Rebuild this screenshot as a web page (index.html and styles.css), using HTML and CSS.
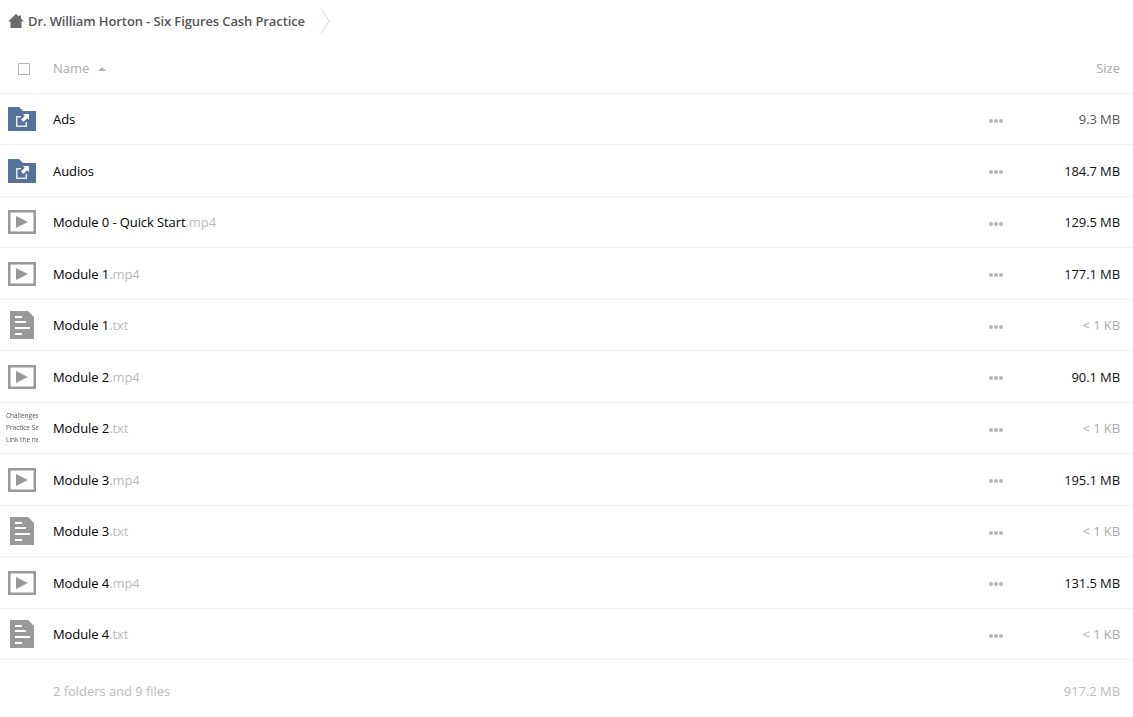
FILE: index.html
```html
<!DOCTYPE html>
<html lang="en">
<head>
<meta charset="utf-8">
<title>Dr. William Horton - Six Figures Cash Practice</title>
<link rel="stylesheet" href="styles.css">
</head>
<body>
<svg class="defs" width="0" height="0" aria-hidden="true">
  <symbol id="i-folder" viewBox="0 0 28 24">
    <path fill="#55729b" d="M0 0H11L15 4H28V24H0Z"/>
    <path fill="none" stroke="#e4e9f0" stroke-width="1.5" d="M13 9.75H8.75V19.25H18.25V15"/>
    <path fill="#fff" d="M15 7H21V13L19.2 11.2L15.4 15L13 12.6L16.8 8.8Z"/>
  </symbol>
  <symbol id="i-video" viewBox="0 0 28 24">
    <rect x="1.25" y="1.25" width="25.5" height="21.5" fill="#fff" stroke="#999" stroke-width="2.5"/>
    <path fill="#999" d="M8 6L20 12L8 18Z"/>
  </symbol>
  <symbol id="i-doc" viewBox="0 0 24 28">
    <path fill="#999" d="M0 0H18L24 6V28H0Z"/>
    <path fill="#fff" d="M5 5H12V7H5ZM5 10H16V12H5ZM5 16H20V18H5ZM5 22H12V24H5Z"/>
  </symbol>
</svg>

<nav class="crumbs">
  <svg class="home" viewBox="0 0 16 14" aria-hidden="true"><path fill="#6a6a6a" d="M8 0L11 2.6V1.5H13V4.4L16 7.5H13.5V14H2.5V7.5H0Z"/></svg>
  <span class="crumb-title">Dr. William Horton - Six Figures Cash Practice</span>
  <svg class="chev" viewBox="0 0 10 26" aria-hidden="true"><path fill="none" stroke="#ddd" d="M1 .5L9 13L1 25.5"/></svg>
</nav>

<div class="head row-grid">
  <span class="check"></span>
  <span class="head-name">Name <i class="sort"></i></span>
  <span></span>
  <span class="head-size">Size</span>
</div>

<ul class="list">
  <li class="row row-grid"><svg class="ic"><use href="#i-folder"/></svg><span class="name">Ads</span><span class="dots"><i></i><i></i><i></i></span><span class="size s-grey">9.3 MB</span></li>
  <li class="row row-grid"><svg class="ic"><use href="#i-folder"/></svg><span class="name">Audios</span><span class="dots"><i></i><i></i><i></i></span><span class="size">184.7 MB</span></li>
  <li class="row row-grid"><svg class="ic"><use href="#i-video"/></svg><span class="name">Module 0 - Quick Start<em>.mp4</em></span><span class="dots"><i></i><i></i><i></i></span><span class="size">129.5 MB</span></li>
  <li class="row row-grid"><svg class="ic"><use href="#i-video"/></svg><span class="name">Module 1<em>.mp4</em></span><span class="dots"><i></i><i></i><i></i></span><span class="size">177.1 MB</span></li>
  <li class="row row-grid"><svg class="ic ic-doc"><use href="#i-doc"/></svg><span class="name">Module 1<em>.txt</em></span><span class="dots"><i></i><i></i><i></i></span><span class="size s-light">&lt; 1 KB</span></li>
  <li class="row row-grid"><svg class="ic"><use href="#i-video"/></svg><span class="name">Module 2<em>.mp4</em></span><span class="dots"><i></i><i></i><i></i></span><span class="size">90.1 MB</span></li>
  <li class="row row-grid"><div class="thumb"><p>Challenges</p><p>Practice Se</p><p>Link the ne</p></div><span class="name">Module 2<em>.txt</em></span><span class="dots"><i></i><i></i><i></i></span><span class="size s-light">&lt; 1 KB</span></li>
  <li class="row row-grid"><svg class="ic"><use href="#i-video"/></svg><span class="name">Module 3<em>.mp4</em></span><span class="dots"><i></i><i></i><i></i></span><span class="size">195.1 MB</span></li>
  <li class="row row-grid"><svg class="ic ic-doc"><use href="#i-doc"/></svg><span class="name">Module 3<em>.txt</em></span><span class="dots"><i></i><i></i><i></i></span><span class="size s-light">&lt; 1 KB</span></li>
  <li class="row row-grid"><svg class="ic"><use href="#i-video"/></svg><span class="name">Module 4<em>.mp4</em></span><span class="dots"><i></i><i></i><i></i></span><span class="size">131.5 MB</span></li>
  <li class="row row-grid"><svg class="ic ic-doc"><use href="#i-doc"/></svg><span class="name">Module 4<em>.txt</em></span><span class="dots"><i></i><i></i><i></i></span><span class="size s-light">&lt; 1 KB</span></li>
</ul>

<div class="foot row-grid">
  <span></span>
  <span class="foot-name">2 folders and 9 files</span>
  <span></span>
  <span class="foot-size">917.2 MB</span>
</div>
</body>
</html>
```
FILE: styles.css
```css
* { box-sizing: border-box; }
html, body { margin: 0; padding: 0; }
body {
  background: #fff;
  color: #000;
  font-family: "Open Sans", sans-serif;
  font-size: 13px;
  overflow: hidden;
}
.defs { display: block; height: 0; }

.crumbs {
  display: flex;
  align-items: center;
  height: 41.5px;
  padding-left: 8px;
}
.home { width: 16px; height: 14px; margin-right: 4px; }
.crumb-title { color: #555; font-weight: 600; letter-spacing: -0.11px; }
.chev { width: 10px; height: 26px; margin-left: 15px; }

.row-grid {
  display: grid;
  grid-template-columns: 45px 1fr 40px 90px;
  align-items: center;
  padding: 0 13px 0 8px;
}

.head {
  height: 52px;
  padding-top: 1px;
  border-bottom: 1px solid #eee;
}
.check {
  display: block;
  width: 12px;
  height: 12px;
  margin: 2px 0 0 10px;
  border: 1px solid #b5b5b5;
}
.head-name { color: #aaa; }
.sort {
  display: inline-block;
  width: 0;
  height: 0;
  margin: 0 0 2px 5px;
  border: 4px solid transparent;
  border-top: 0;
  border-bottom: 4px solid #b5b5b5;
}
.head-size { color: #aaa; text-align: right; }

.list { list-style: none; margin: 0; padding: 0; }
.row {
  height: 51.5px;
  padding-top: 1px;
  border-bottom: 1px solid #eee;
}
.ic { display: block; width: 28px; height: 24px; }
.ic-doc { width: 24px; height: 28px; margin-left: 2px; }
.name { letter-spacing: -0.09px; }
.name em { color: #bbb; font-style: normal; }
.dots {
  display: flex;
  gap: 1px;
  justify-content: flex-start;
  padding-top: 3px;
  margin-left: -1px;
}
.dots i {
  display: block;
  width: 4px;
  height: 4px;
  border-radius: 50%;
  background: #b5b5b5;
}
.size { text-align: right; color: #111; letter-spacing: -0.1px; }
.s-grey { color: #555; }
.s-light { color: #aaa; }

.thumb {
  width: 32px;
  height: 36px;
  margin-left: -2px;
  overflow: hidden;
  font-size: 6.5px;
  line-height: 12px;
  color: #555;
  white-space: nowrap;
  will-change: transform;
}
.thumb p { margin: 0; }

.foot { height: 62px; color: #bbb; letter-spacing: -0.05px; }
.foot-size { text-align: right; }
```
